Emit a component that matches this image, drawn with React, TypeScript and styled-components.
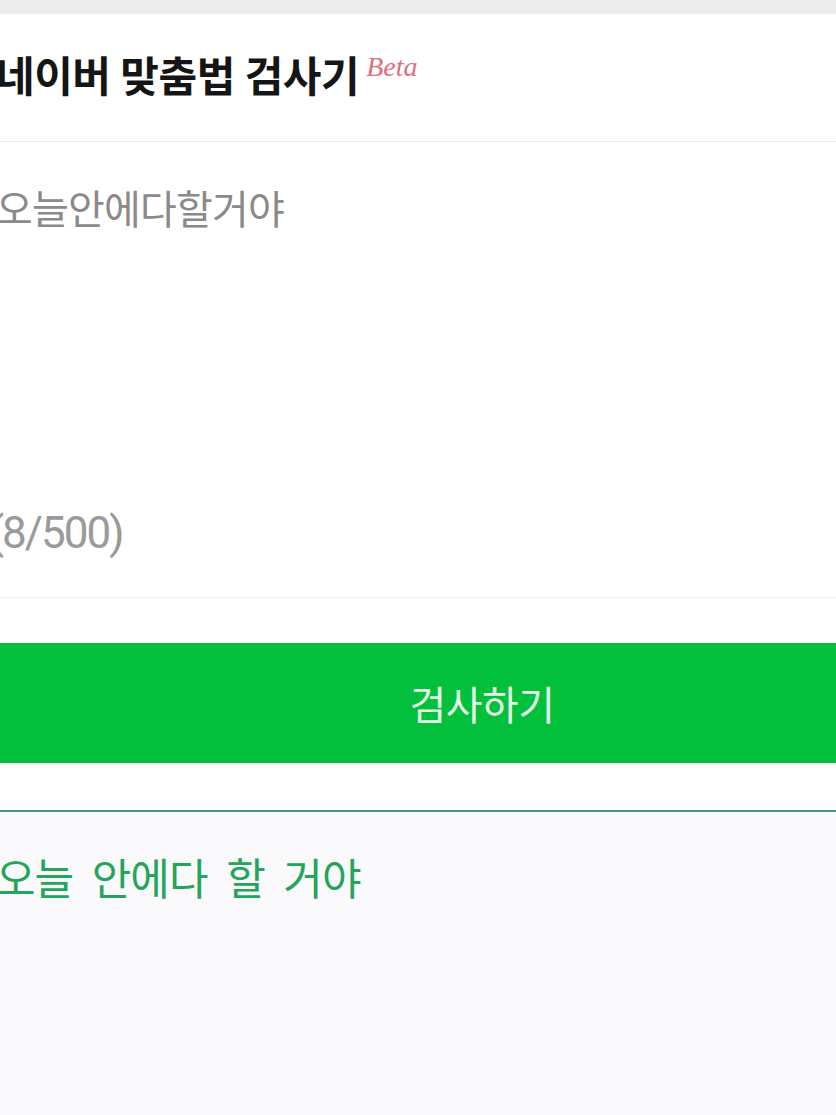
import React from "react";
import styled, { createGlobalStyle } from "styled-components";

const GlobalStyle = createGlobalStyle`
  html, body {
    margin: 0;
    padding: 0;
    background: #fafafc;
    overflow: hidden;
  }
  * {
    box-sizing: border-box;
  }
`;

const FONT = `Roboto, "Noto Sans CJK KR", "Noto Sans", sans-serif`;

// the screenshot is a cropped, zoomed phone page: the layout runs past both edges
const Page = styled.div`
  width: 976px;
  margin-left: -6px;
  font-family: ${FONT};
`;

const TopStrip = styled.div`
  height: 14px;
  background: #ececec;
`;

const Header = styled.header`
  height: 128px;
  background: #fff;
  border-bottom: 1px solid #ececec;
  display: flex;
  align-items: center;
  padding-left: 2px;
`;

const Title = styled.h1`
  margin: 0;
  display: flex;
  align-items: flex-start;
  font-size: 42px;
  line-height: 1;
  font-weight: 700;
  letter-spacing: -0.5px;
  color: #151515;
`;

const Beta = styled.span`
  margin: -4px 0 0 7px;
  font-family: "Liberation Serif", serif;
  font-style: italic;
  font-weight: 400;
  font-size: 28px;
  letter-spacing: 0;
  color: #e0707e;
`;

const Editor = styled.section`
  height: 456px;
  background: #fff;
  border-bottom: 1px solid #eeeeee;
  display: flex;
  flex-direction: column;
  justify-content: space-between;
  padding: 44px 0 39px 2px;
`;

const Placeholder = styled.div`
  font-size: 40px;
  line-height: 50px;
  letter-spacing: -0.8px;
  color: #8a8a8a;
`;

const Counter = styled.div`
  margin-left: -7px;
  font-size: 44px;
  line-height: 50px;
  letter-spacing: -2px;
  color: #9a9a9a;
`;

const ButtonRow = styled.div`
  background: #fff;
  padding: 45px 0 47px;
`;

const CheckButton = styled.button`
  display: block;
  width: 100%;
  height: 120px;
  border: none;
  background: #03c03c;
  color: #e3f7e6;
  font-family: ${FONT};
  font-size: 40px;
  letter-spacing: -0.5px;
  cursor: pointer;
`;

const ResultSection = styled.section`
  border-top: 2px solid #3f9b70;
  background: #fafafc;
  min-height: 320px;
  padding: 43px 0 0 2px;
`;

const ResultText = styled.p`
  margin: 0;
  font-size: 43px;
  line-height: 50px;
  letter-spacing: -1px;
  word-spacing: 9px;
  color: #23a55a;
`;

const App: React.FC = () => {
  return (
    <>
      <GlobalStyle />
      <Page>
        <TopStrip />
        <Header>
          <Title>
            네이버 맞춤법 검사기
            <Beta>Beta</Beta>
          </Title>
        </Header>
        <Editor>
          <Placeholder>오늘안에다할거야</Placeholder>
          <Counter>(8/500)</Counter>
        </Editor>
        <ButtonRow>
          <CheckButton type="button">검사하기</CheckButton>
        </ButtonRow>
        <ResultSection>
          <ResultText>오늘 안에다 할 거야</ResultText>
        </ResultSection>
      </Page>
    </>
  );
};

export default App;
